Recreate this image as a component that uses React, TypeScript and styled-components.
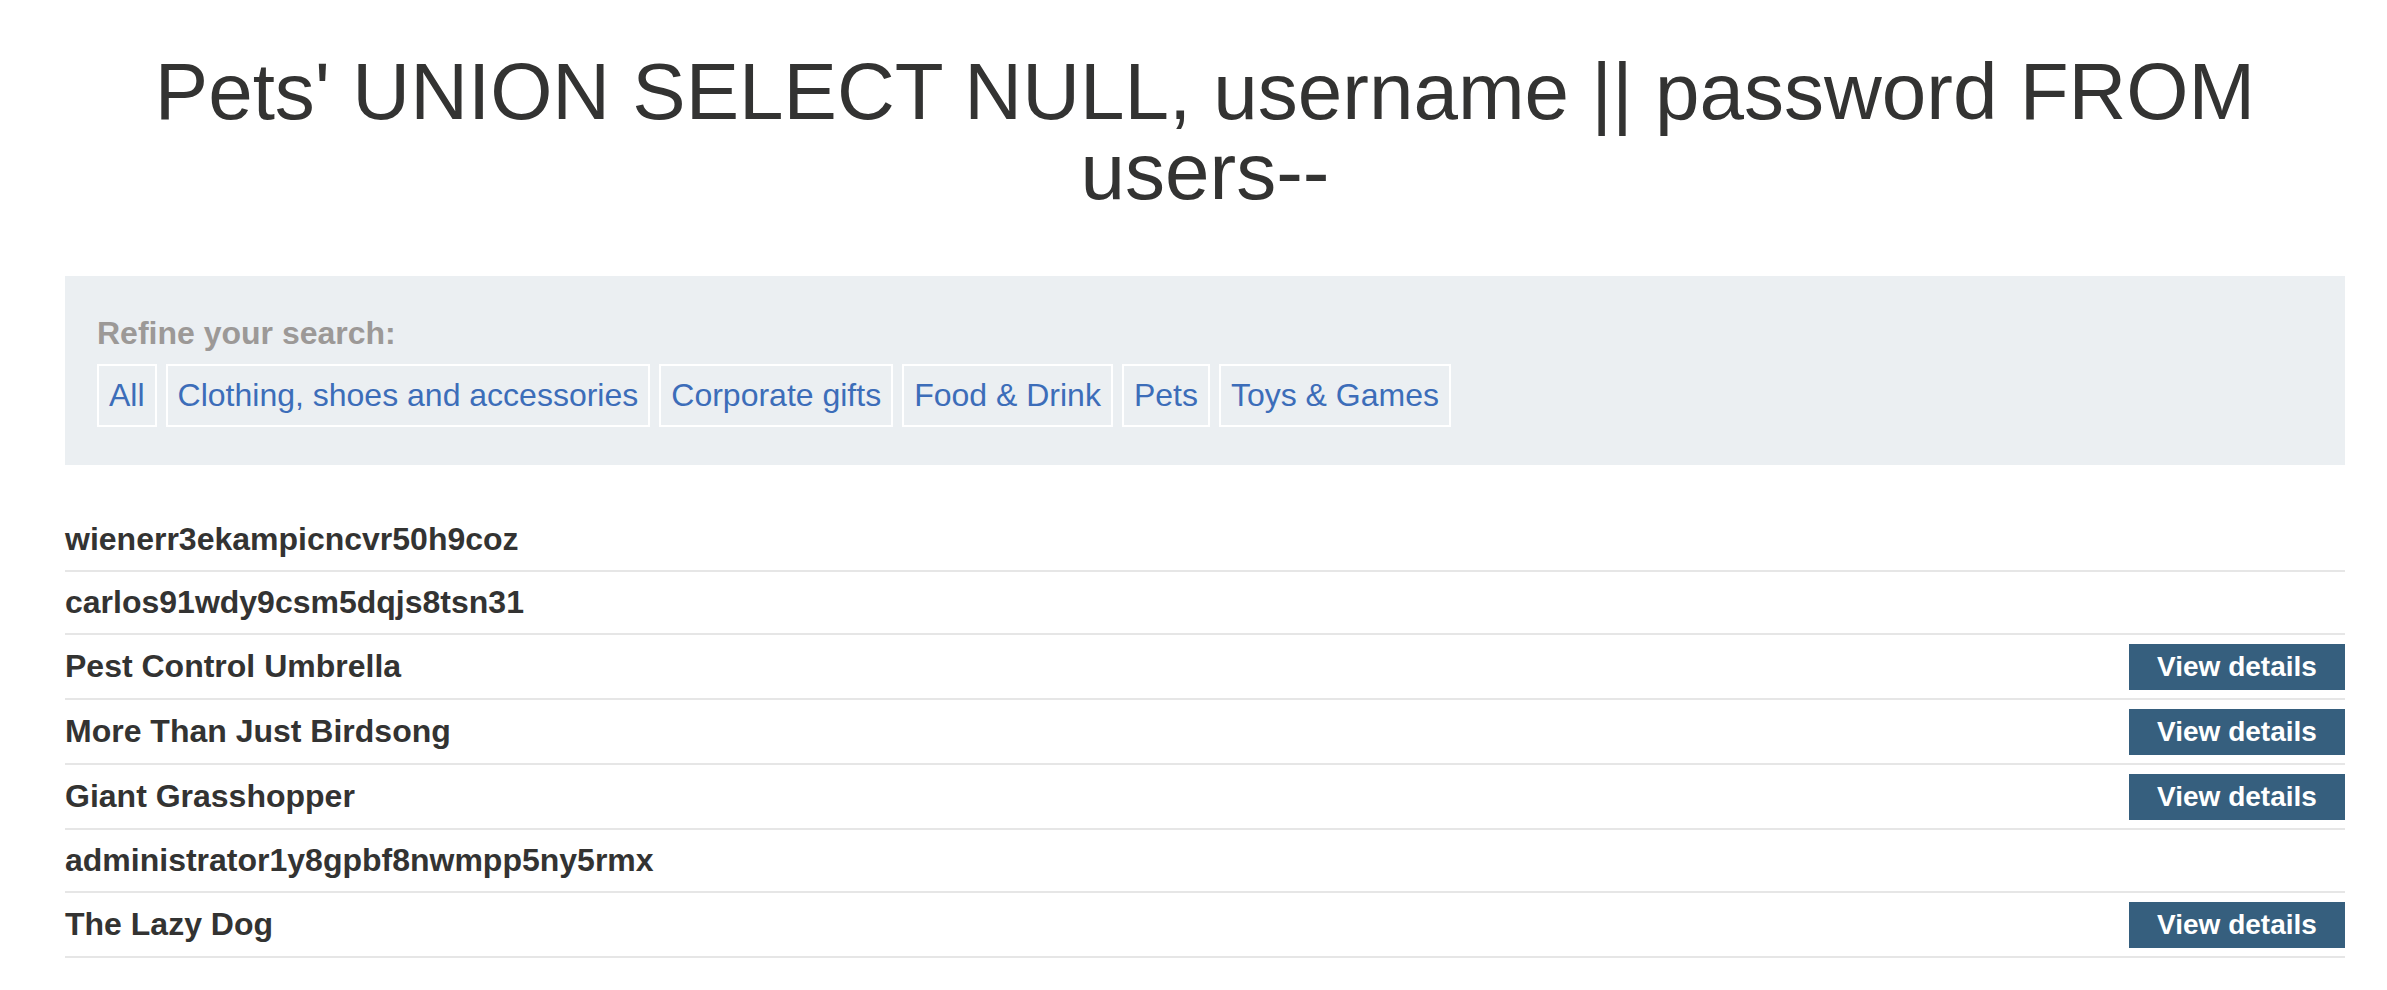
import styled, { createGlobalStyle } from 'styled-components';

const GlobalStyle = createGlobalStyle`
  body {
    margin: 0;
    background: #fff;
    font-family: "Liberation Sans", Arial, sans-serif;
    color: #333332;
  }
`;

const Page = styled.div`
  padding: 52px 42px 0 65px;
`;

const Title = styled.h1`
  margin: 0;
  text-align: center;
  font-size: 80px;
  line-height: 80px;
  font-weight: normal;
  color: #333332;
`;

const FilterPanel = styled.section`
  margin-top: 64px;
  background: #ebeff2;
  padding: 39px 32px 38px;
  display: flex;
  flex-direction: column;
  gap: 12px;
`;

const FilterLabel = styled.div`
  font-size: 32px;
  font-weight: bold;
  color: #9c9997;
`;

const Categories = styled.div`
  display: flex;
  flex-wrap: wrap;
  gap: 9px;
`;

const Category = styled.a`
  display: inline-block;
  border: 2px solid #fff;
  padding: 11px 10px;
  font-size: 32px;
  color: #3c6db9;
  text-decoration: none;
`;

const Results = styled.div`
  margin-top: 44px;
`;

const Row = styled.div`
  display: flex;
  align-items: center;
  justify-content: space-between;
  min-height: 44px;
  padding: 8.5px 0;
  border-bottom: 2px solid #e6e6e6;
`;

const Name = styled.span`
  font-size: 32px;
  font-weight: bold;
  color: #333332;
`;

const DetailsButton = styled.a`
  display: flex;
  align-items: center;
  justify-content: center;
  height: 46px;
  width: 216px;
  background: #365f7e;
  color: #fff;
  font-size: 28px;
  font-weight: bold;
  text-decoration: none;
`;

const categories = [
  'All',
  'Clothing, shoes and accessories',
  'Corporate gifts',
  'Food & Drink',
  'Pets',
  'Toys & Games',
];

const rows: { name: string; product: boolean }[] = [
  { name: 'wienerr3ekampicncvr50h9coz', product: false },
  { name: 'carlos91wdy9csm5dqjs8tsn31', product: false },
  { name: 'Pest Control Umbrella', product: true },
  { name: 'More Than Just Birdsong', product: true },
  { name: 'Giant Grasshopper', product: true },
  { name: 'administrator1y8gpbf8nwmpp5ny5rmx', product: false },
  { name: 'The Lazy Dog', product: true },
];

const App = () => (
  <>
    <GlobalStyle />
    <Page>
      <Title>Pets' UNION SELECT NULL, username || password FROM users--</Title>
      <FilterPanel>
        <FilterLabel>Refine your search:</FilterLabel>
        <Categories>
          {categories.map((c) => (
            <Category key={c} href="#">
              {c}
            </Category>
          ))}
        </Categories>
      </FilterPanel>
      <Results>
        {rows.map((r) => (
          <Row key={r.name}>
            <Name>{r.name}</Name>
            {r.product && <DetailsButton href="#">View details</DetailsButton>}
          </Row>
        ))}
      </Results>
    </Page>
  </>
);

export default App;
